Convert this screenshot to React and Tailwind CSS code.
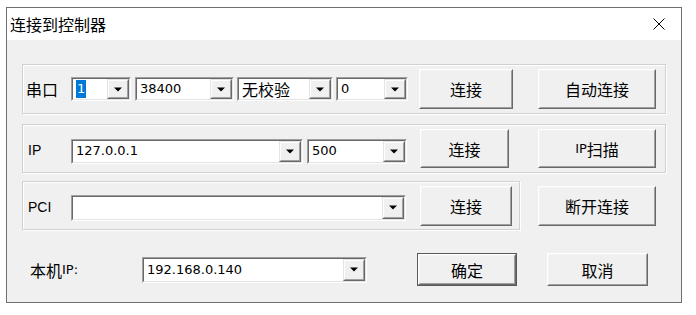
import React from "react";

const CJK = "font-['Noto_Sans_CJK_SC',sans-serif] text-[16px] leading-[20px] text-black";
const LAT = "font-['DejaVu_Sans',sans-serif] text-[13px] leading-[16px] text-black";

function Arrow() {
  return (
    <svg width="8" height="5" viewBox="0 0 8 5">
      <path d="M0 0.5h8L4 4.5z" fill="#000" />
    </svg>
  );
}

function Combo({ className, children }) {
  return (
    <div className={`flex border border-t-[#a0a0a0] border-l-[#a0a0a0] border-r-white border-b-white ${className}`}>
      <div className="flex min-w-0 flex-1 border border-t-[#696969] border-l-[#696969] border-r-[#e3e3e3] border-b-[#e3e3e3] bg-white">
        <div className="flex min-w-0 flex-1 items-center pl-[3px]">{children}</div>
        <div className="flex w-[22px] border border-t-[#e3e3e3] border-l-[#e3e3e3] border-r-[#696969] border-b-[#696969]">
          <div className="flex flex-1 items-center justify-center border border-t-white border-l-white border-r-[#a0a0a0] border-b-[#a0a0a0] bg-[#f0f0f0]">
            <Arrow />
          </div>
        </div>
      </div>
    </div>
  );
}

function Btn({ className, children, isDefault }) {
  const inner = (
    <div className="flex flex-1 border border-t-white border-l-white border-r-[#696969] border-b-[#696969]">
      <div className="flex flex-1 items-center justify-center border border-t-[#f4f4f4] border-l-[#f4f4f4] border-r-[#a0a0a0] border-b-[#a0a0a0] bg-[#f0f0f0]">
        {children}
      </div>
    </div>
  );
  if (isDefault) {
    return <div className={`flex border border-[#5a5a5a] ${className}`}>{inner}</div>;
  }
  return <div className={`flex ${className}`}>{inner}</div>;
}

const group = "border border-[#d0d0d0] shadow-[inset_1px_1px_0_#fff,1px_1px_0_#fff]";

export default function App() {
  return (
    <div className="h-[315px] w-[696px] bg-white pl-[6px] pt-[7px]">
      <div className="flex h-[296px] w-[676px] flex-col border border-[#707070] bg-[#f0f0f0]">
        {/* Title bar */}
        <div className="flex h-[32px] items-center justify-between bg-white pl-[3px] pr-[16px]">
          <span className={CJK}>连接到控制器</span>
          <svg width="12" height="12" viewBox="0 0 12 12">
            <path d="M0.5 0.5L11.5 11.5M11.5 0.5L0.5 11.5" stroke="#000" strokeWidth="1" />
          </svg>
        </div>

        <div className="flex flex-1 flex-col pl-[15px]">
          {/* 串口 */}
          <div className={`mt-[24px] flex h-[50px] w-[644px] items-center ${group}`}>
            <span className={`w-[48px] pl-[3px] ${CJK}`}>串口</span>
            <Combo className="h-[24px] w-[60px]">
              <span className={`${LAT} bg-[#0078d7] px-[1px] leading-[18px] text-white`}>1</span>
            </Combo>
            <Combo className="ml-[4px] h-[24px] w-[99px]">
              <span className={LAT}>38400</span>
            </Combo>
            <Combo className="ml-[3px] h-[24px] w-[96px]">
              <span className={CJK}>无校验</span>
            </Combo>
            <Combo className="ml-[3px] h-[24px] w-[72px]">
              <span className={LAT}>0</span>
            </Combo>
            <Btn className="ml-[11px] h-[40px] w-[94px]">
              <span className={CJK}>连接</span>
            </Btn>
            <Btn className="ml-[25px] h-[40px] w-[118px]">
              <span className={CJK}>自动连接</span>
            </Btn>
          </div>

          {/* IP */}
          <div className={`mt-[10px] flex h-[49px] w-[644px] items-center ${group}`}>
            <span className={`mt-[4px] w-[48px] pl-[5px] font-['Liberation_Sans',sans-serif] text-[14px]`}>IP</span>
            <Combo className="mt-[5px] h-[25px] w-[232px]">
              <span className={LAT}>127.0.0.1</span>
            </Combo>
            <Combo className="ml-[4px] mt-[5px] h-[25px] w-[100px]">
              <span className={LAT}>500</span>
            </Combo>
            <Btn className="ml-[13px] h-[39px] w-[89px]">
              <span className={CJK}>连接</span>
            </Btn>
            <Btn className="ml-[29px] h-[39px] w-[118px]">
              <span className={LAT}>IP</span>
              <span className={CJK}>扫描</span>
            </Btn>
          </div>

          {/* PCI */}
          <div className="mt-[8px] flex items-center">
            <div className={`flex h-[49px] w-[498px] items-center ${group}`}>
              <span className={`mt-[4px] w-[48px] pl-[5px] font-['Liberation_Sans',sans-serif] text-[14px]`}>PCI</span>
              <Combo className="mt-[4px] h-[26px] w-[335px]" />
              <Btn className="ml-[14px] h-[40px] w-[92px]">
                <span className={CJK}>连接</span>
              </Btn>
            </div>
            <Btn className="ml-[18px] h-[40px] w-[118px]">
              <span className={CJK}>断开连接</span>
            </Btn>
          </div>

          {/* 本机IP */}
          <div className="mt-[23px] flex h-[33px] items-center">
            <span className={`ml-[8px] flex w-[112px] items-center`}>
              <span className={CJK}>本机</span>
              <span className={LAT}>IP:</span>
            </span>
            <Combo className="h-[26px] w-[225px]">
              <span className={LAT}>192.168.0.140</span>
            </Combo>
            <Btn isDefault className="ml-[50px] h-[33px] w-[100px]">
              <span className={CJK}>确定</span>
            </Btn>
            <Btn className="ml-[30px] h-[33px] w-[101px]">
              <span className={CJK}>取消</span>
            </Btn>
          </div>
        </div>
      </div>
    </div>
  );
}
